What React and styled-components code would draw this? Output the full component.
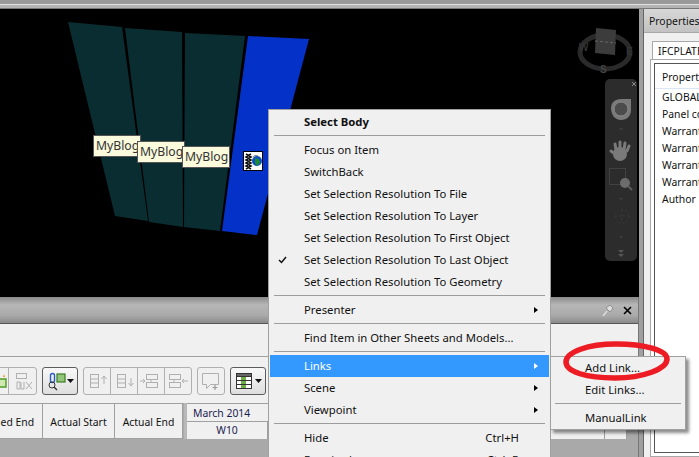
import React from 'react';
import styled, { createGlobalStyle } from 'styled-components';

const uiFont = '"Noto Sans", "Liberation Sans", sans-serif';

const GlobalStyle = createGlobalStyle`
  html, body {
    margin: 0;
    padding: 0;
    background: #a0a0a0;
    overflow: hidden;
  }
`;

const Screen = styled.div`
  position: relative;
  width: 699px;
  height: 457px;
  overflow: hidden;
  font-family: ${uiFont};
  font-size: 11.3px;
  color: #111;
`;

const TopBar = styled.div`
  height: 9px;
  box-sizing: border-box;
  background: linear-gradient(#999 0, #999 4px, #e0e0e0 4px, #e0e0e0 5px, #b4b4b4 5px, #b4b4b4 8px, #777 8px);
`;

const Workspace = styled.div`
  display: flex;
  height: 448px;
`;

const LeftColumn = styled.div`
  width: 639px;
  display: flex;
  flex-direction: column;
`;

const Viewport = styled.div`
  position: relative;
  height: 288px;
  background: #000;
  overflow: hidden;
`;

const SceneSvg = styled.svg`
  display: block;
`;

const Tag = styled.div`
  position: absolute;
  left: ${(p) => p.$x}px;
  top: ${(p) => p.$y}px;
  width: 48px;
  height: 22px;
  box-sizing: border-box;
  border: 1px solid #555;
  background: #fafadc;
  color: #333;
  font-size: 12.2px;
  line-height: 19px;
  padding-left: 2px;
  white-space: nowrap;
`;

const LinkBadge = styled.div`
  position: absolute;
  left: 243px;
  top: 142px;
  width: 20px;
  height: 20px;
  box-sizing: border-box;
  border: 1px solid #000;
  background: #fff;
`;

const NavBar = styled.div`
  position: absolute;
  left: 605px;
  top: 70px;
  width: 32px;
  height: 182px;
  border-radius: 5px;
  background: #2c2c2c;
`;

const DockPanel = styled.div`
  flex: 1;
  display: flex;
  flex-direction: column;
  border-right: 1px solid #777;
  min-height: 0;
`;

const DockTitle = styled.div`
  height: 26px;
  display: flex;
  align-items: center;
  justify-content: flex-end;
  gap: 7px;
  padding-right: 5px;
  background: linear-gradient(#8a8a8a 0, #b6b6b6 30%, #aaa 70%, #8a8a8a 100%);
  border-bottom: 1px solid #555;
`;

const BlankBand = styled.div`
  height: 32px;
  background: #f0f0f0;
  border-bottom: 1px solid #a0a0a0;
`;

const Toolbar = styled.div`
  height: 46px;
  box-sizing: border-box;
  background: #f0f0f0;
  display: flex;
  align-items: flex-start;
  gap: 5px;
  padding-top: 10px;
  margin-left: -19px;
`;

const ToolGroup = styled.div`
  display: flex;
  height: 26px;
  box-sizing: content-box;
  border: 1px solid ${(p) => (p.$active ? '#5c5c5c' : '#b0b0b0')};
  border-radius: 3px;
  background: ${(p) => (p.$active ? 'linear-gradient(#f8f8f8, #dedede)' : '#f0f0f0')};
`;

const ToolButton = styled.div`
  width: ${(p) => p.$w || 26}px;
  height: 26px;
  display: flex;
  align-items: center;
  justify-content: center;
  & + & {
    border-left: 1px solid #b0b0b0;
  }
`;

const TableArea = styled.div`
  flex: 1;
  background: #a9a9a9;
  min-height: 0;
  font-size: 10.4px;
`;

const TableHead = styled.div`
  display: flex;
  height: 36px;
  margin-left: -35px;
`;

const ColumnCell = styled.div`
  width: ${(p) => p.$w}px;
  box-sizing: border-box;
  background: #f0f0f0;
  border-top: 1px solid #a0a0a0;
  border-right: 1px solid #a0a0a0;
  border-bottom: 1px solid #a0a0a0;
  padding-top: 2px;
  display: flex;
  align-items: center;
  justify-content: center;
  white-space: nowrap;
`;

const SplitGap = styled.div`
  width: 3px;
  margin-left: 1px;
  background: #b8b8b8;
`;

const Gantt = styled.div`
  width: 440px;
  background: #f0f0f0;
  border-top: 1px solid #a0a0a0;
  display: flex;
  flex-direction: column;
  color: #1c1c50;
  box-sizing: border-box;
`;

const MonthRow = styled.div`
  height: 17px;
  line-height: 18px;
  padding-left: 6px;
  border-bottom: 1px solid #a0a0a0;
`;

const WeekRow = styled.div`
  flex: 1;
  display: flex;
`;

const Week = styled.div`
  width: ${(p) => p.$w}px;
  box-sizing: border-box;
  text-align: center;
  line-height: 17px;
  border-right: 1px solid #a0a0a0;
`;

const RightColumn = styled.div`
  flex: 1;
  padding-left: 4px;
  background: #a0a0a0;
  display: flex;
`;

const PropsPanel = styled.div`
  flex: 1;
  background: #f0f0f0;
  border-left: 1px solid #666;
  overflow: hidden;
  display: flex;
  flex-direction: column;
  font-size: 10.4px;
`;

const PropsTitle = styled.div`
  height: 23px;
  line-height: 24px;
  padding-left: 5px;
  white-space: nowrap;
  background: linear-gradient(#d8d8d8, #c2c2c2);
  border-bottom: 1px solid #a8a8a8;
`;

const TabRow = styled.div`
  padding: 8px 0 0 8px;
`;

const Tab = styled.div`
  height: 18px;
  width: 80px;
  box-sizing: border-box;
  line-height: 18px;
  padding-left: 5px;
  background: #fff;
  border: 1px solid #a8a8a8;
  border-bottom: 0;
  white-space: nowrap;
`;

const TabPane = styled.div`
  flex: 1;
  margin-left: 6px;
  padding: 3px;
  background: #fff;
  border: 1px solid #a8a8a8;
  border-right: 0;
  display: flex;
`;

const PropsList = styled.div`
  flex: 1;
  border: 1px solid #555;
  border-right: 0;
  background: #fff;
  padding-left: 7px;
  white-space: nowrap;
`;

const PropsHeader = styled.div`
  height: 24px;
  line-height: 26px;
  margin-left: -7px;
  padding-left: 7px;
  border-bottom: 1px solid #dbe6f4;
`;

const PropsRow = styled.div`
  height: 17px;
  line-height: 17px;
`;

const Menu = styled.div`
  position: absolute;
  left: 268px;
  top: 109px;
  width: 283px;
  height: 370px;
  box-sizing: border-box;
  padding: 1px;
  border: 1px solid #a0a0a0;
  background: #f0f0f0;
`;

const SubMenu = styled(Menu)`
  left: 550px;
  top: 356px;
  width: 136px;
  height: 74px;
  padding: 0;
  box-shadow: 3px 3px 3px rgba(0, 0, 0, 0.45);
`;

const MenuRow = styled.div`
  position: relative;
  height: 22px;
  line-height: 22px;
  padding-left: ${(p) => p.$indent}px;
  font-weight: ${(p) => (p.$bold ? 700 : 400)};
  background: ${(p) => (p.$active ? '#3399ff' : 'transparent')};
  color: ${(p) => (p.$active ? '#fff' : '#111')};
  white-space: nowrap;
`;

const Separator = styled.div`
  height: 1px;
  margin: 2px 4px 3px;
  background: #9c9c9c;
`;

const Shortcut = styled.span`
  position: absolute;
  right: 30px;
`;

const Arrow = styled.span`
  position: absolute;
  right: 11px;
  top: 8px;
  width: 0;
  height: 0;
  border-top: 3.5px solid transparent;
  border-bottom: 3.5px solid transparent;
  border-left: 4px solid ${(p) => (p.$active ? '#fff' : '#000')};
`;

const Check = styled.svg`
  position: absolute;
  left: 8px;
  top: 7px;
`;

const Annotation = styled.svg`
  position: absolute;
  left: 558px;
  top: 336px;
  pointer-events: none;
`;

const tags = [[93, 126], [137, 132], [182, 137]];

const mainMenu = [
  { label: 'Select Body', bold: true },
  'sep',
  { label: 'Focus on Item' },
  { label: 'SwitchBack' },
  { label: 'Set Selection Resolution To File' },
  { label: 'Set Selection Resolution To Layer' },
  { label: 'Set Selection Resolution To First Object' },
  { label: 'Set Selection Resolution To Last Object', checked: true },
  { label: 'Set Selection Resolution To Geometry' },
  'sep',
  { label: 'Presenter', sub: true },
  'sep',
  { label: 'Find Item in Other Sheets and Models...' },
  'sep',
  { label: 'Links', sub: true, active: true },
  { label: 'Scene', sub: true },
  { label: 'Viewpoint', sub: true },
  'sep',
  { label: 'Hide', keys: 'Ctrl+H' },
  { label: 'Required', keys: 'Ctrl+R' },
];

const properties = ['GLOBALID', 'Panel code', 'Warranty A', 'Warranty B', 'Warranty C', 'Warranty D', 'Author'];

const Scene = () => (
  <SceneSvg width="639" height="288" viewBox="0 9 639 288">
    <polygon points="68,22 122,27 148,221 115,216" fill="#0a2d31" />
    <polygon points="125,28 182,32 183,227 149,222" fill="#0a2d31" />
    <polygon points="185,33 245,36 220,231 184,227" fill="#0a2d31" />
    <polygon points="248,36 309,39 257,235 222,231" fill="#0431c8" />
    <ellipse cx="605" cy="52" rx="25" ry="17" fill="none" stroke="#2a2a2a" strokeWidth="5" />
    <polygon points="596,28 616,30 615,55 595,53" fill="#3c3c3c" />
    <line x1="595" y1="41" x2="616" y2="43" stroke="#666" strokeWidth="1" strokeDasharray="3 2" />
    <text x="579" y="51" fontSize="10" fontWeight="700" fill="#333" fontFamily="Liberation Sans">W</text>
    <text x="626" y="55" fontSize="10" fontWeight="700" fill="#333" fontFamily="Liberation Sans">E</text>
    <text x="600" y="73" fontSize="10" fontWeight="700" fill="#444" fontFamily="Liberation Sans">S</text>
  </SceneSvg>
);

const LinkIcon = () => (
  <svg width="18" height="18" viewBox="0 0 18 18">
    <path d="M2 2l5 3-5 3 5 3-5 3 5 3M7 2L2 5l5 3-5 3 5 3-5 3" fill="none" stroke="#111" strokeWidth="1.6" />
    <circle cx="13" cy="9" r="5" fill="#0b4fc4" />
    <path d="M11 6l4 1 1 4-3 3-2-3z" fill="#1f8a2e" />
    <path d="M9 5c1-2 5-2 6 0" fill="none" stroke="#777" strokeWidth="1" />
  </svg>
);

const NavIcons = () => (
  <svg width="32" height="182" viewBox="605 79 32 182">
    <path d="M611 108c0-6 5-9 10-9h10v11c0 6-4 10-10 10s-10-5-10-12z" fill="#7a7a7a" />
    <circle cx="621" cy="109" r="7" fill="#4c4c4c" stroke="#8a8a8a" />
    <path d="M633 82l4 4M637 82l-4 4" stroke="#8a8a8a" transform="translate(-1 0)" />
    <path d="M619 128l2 3 2-3z" fill="#3c3c3c" />
    <g stroke="#7a7a7a" strokeWidth="3" strokeLinecap="round">
      <line x1="616" y1="150" x2="615" y2="144" />
      <line x1="620" y1="150" x2="620" y2="142" />
      <line x1="624" y1="150" x2="625" y2="143" />
      <line x1="627" y1="151" x2="629" y2="146" />
      <line x1="615" y1="154" x2="611" y2="151" />
    </g>
    <ellipse cx="620" cy="154" rx="7" ry="7" fill="#7a7a7a" />
    <rect x="609.5" y="168.5" width="16" height="16" fill="none" stroke="#414141" />
    <circle cx="625" cy="183" r="5" fill="#6c6c6c" />
    <line x1="628" y1="186" x2="632" y2="190" stroke="#5c5c5c" strokeWidth="2" />
    <path d="M619 198l2 3 2-3z" fill="#3c3c3c" />
    <circle cx="622" cy="216" r="7" fill="none" stroke="#383838" strokeDasharray="2 2" />
    <path d="M615 216h14M622 210v12" stroke="#3a3a3a" strokeDasharray="2 2" />
    <path d="M619 236l2 3 2-3z" fill="#3c3c3c" />
    <path d="M618 250l3 3 3-3zM618 254l3 3 3-3z" fill="#555" />
  </svg>
);

const PinClose = () => (
  <>
    <svg width="14" height="14" viewBox="0 0 14 14">
      <path d="M2 13l4-5" stroke="#ddd" strokeWidth="1.4" />
      <path d="M5 5l4-3 3 3-3 4z" fill="#ddd" stroke="#777" strokeWidth="0.7" />
    </svg>
    <svg width="11" height="11" viewBox="0 0 11 11">
      <path d="M2 2l7 7M9 2l-7 7" stroke="#000" strokeWidth="1.6" />
    </svg>
  </>
);

const ToolIcon = ({ children, w = 24 }) => (
  <svg width={w} height="20" viewBox={`0 0 ${w} 20`} fill="none">
    {children}
  </svg>
);

const dim = { stroke: '#b0b0b0', strokeWidth: 1 };

const StackLines = ({ x = 3 }) => (
  <g {...dim}>
    <rect x={x + 0.5} y="3.5" width="8" height="13" />
    <path d={`M${x} 8h9M${x} 12h9`} />
  </g>
);

const BoxPair = ({ x = 7 }) => (
  <g {...dim}>
    <rect x={x + 0.5} y="3.5" width="11" height="5" />
    <rect x={x + 0.5} y="11.5" width="11" height="5" />
    <path d={`M${x + 5} 8v4`} />
  </g>
);

const DropTriangle = () => <path d="M0 8h7l-3.5 4z" fill="#111" transform="translate(22 0)" />;

const Toolstrip = () => (
  <Toolbar>
    <ToolGroup>
      <ToolButton>
        <ToolIcon>
          <path d="M20 6l1-3 1 3z" fill="#f0a020" />
          <path d="M16 8h7v8h-7z" fill="#cfe9b0" stroke="#4d9a25" strokeWidth="1.4" />
        </ToolIcon>
      </ToolButton>
      <ToolButton $w={27}>
        <ToolIcon>
          <rect x="5.5" y="2.5" width="10" height="5" {...dim} />
          <path d="M6 11v7h3v-7zM10 11v7h3v-7M15 11l6 7M21 11l-6 7" {...dim} />
        </ToolIcon>
      </ToolButton>
    </ToolGroup>
    <ToolGroup $active>
      <ToolButton $w={34}>
        <ToolIcon w={30}>
          <rect x="5.5" y="2.5" width="4" height="9" rx="2" stroke="#2a5bc0" strokeWidth="1.4" />
          <rect x="12" y="3" width="8" height="8" fill="#93c67a" stroke="#3a7d22" strokeWidth="1.2" />
          <circle cx="7" cy="14" r="3" stroke="#333" />
          <path d="M9 16l3 3" stroke="#333" strokeWidth="1.4" />
          <DropTriangle />
        </ToolIcon>
      </ToolButton>
    </ToolGroup>
    <ToolGroup>
      <ToolButton>
        <ToolIcon>
          <StackLines x={5} />
          <path d="M19 13V5M16.5 8l2.5-3 2.5 3" {...dim} />
        </ToolIcon>
      </ToolButton>
      <ToolButton>
        <ToolIcon>
          <StackLines x={5} />
          <path d="M19 7v8M16.5 12l2.5 3 2.5-3" {...dim} />
        </ToolIcon>
      </ToolButton>
      <ToolButton>
        <ToolIcon>
          <BoxPair />
          <path d="M1 10h5M4 8l2 2-2 2" {...dim} />
        </ToolIcon>
      </ToolButton>
      <ToolButton>
        <ToolIcon>
          <BoxPair x={3} />
          <path d="M22 10h-6M18 8l-2 2 2 2" {...dim} />
        </ToolIcon>
      </ToolButton>
    </ToolGroup>
    <ToolGroup>
      <ToolButton>
        <ToolIcon>
          <path d="M3.5 2.5h16v11h-8l-4 4v-4h-4z" {...dim} />
          <path d="M16 14v5M13.5 16.5h5" stroke="#999" strokeWidth="1.2" />
        </ToolIcon>
      </ToolButton>
    </ToolGroup>
    <ToolGroup $active>
      <ToolButton $w={34}>
        <ToolIcon w={30}>
          <rect x="3.5" y="2.5" width="15" height="15" fill="#fff" stroke="#333" />
          <rect x="3.5" y="2.5" width="15" height="3" fill="#666" stroke="#333" />
          <rect x="8" y="6" width="5" height="11" fill="#6fae45" />
          <path d="M4 9.5h14M4 13.5h14" stroke="#333" />
          <DropTriangle />
        </ToolIcon>
      </ToolButton>
    </ToolGroup>
  </Toolbar>
);

const App = () => (
  <Screen>
    <GlobalStyle />
    <TopBar />
    <Workspace>
      <LeftColumn>
        <Viewport>
          <Scene />
          {tags.map(([x, y]) => (
            <Tag key={x} $x={x} $y={y}>MyBlog</Tag>
          ))}
          <LinkBadge><LinkIcon /></LinkBadge>
          <NavBar><NavIcons /></NavBar>
        </Viewport>
        <DockPanel>
          <DockTitle><PinClose /></DockTitle>
          <BlankBand />
          <Toolstrip />
          <TableArea>
            <TableHead>
              <ColumnCell $w={78}>Planned End</ColumnCell>
              <ColumnCell $w={72}>Actual Start</ColumnCell>
              <ColumnCell $w={68}>Actual End</ColumnCell>
              <SplitGap />
              <Gantt>
                <MonthRow>March 2014</MonthRow>
                <WeekRow>
                  <Week $w={81}>W10</Week>
                  <Week $w={337} />
                  <Week $w={22} />
                </WeekRow>
              </Gantt>
            </TableHead>
          </TableArea>
        </DockPanel>
      </LeftColumn>
      <RightColumn>
        <PropsPanel>
          <PropsTitle>Properties</PropsTitle>
          <TabRow><Tab>IFCPLATE</Tab></TabRow>
          <TabPane>
            <PropsList>
              <PropsHeader>Property</PropsHeader>
              {properties.map((name) => (
                <PropsRow key={name}>{name}</PropsRow>
              ))}
            </PropsList>
          </TabPane>
        </PropsPanel>
      </RightColumn>
    </Workspace>
    <Menu>
      {mainMenu.map((item, i) =>
        item === 'sep' ? (
          <Separator key={i} />
        ) : (
          <MenuRow key={item.label} $indent={34} $bold={item.bold} $active={item.active}>
            {item.checked && (
              <Check width="9" height="8" viewBox="0 0 9 8">
                <path d="M1 4l2.5 2.5L8 1" fill="none" stroke="#111" strokeWidth="1.5" />
              </Check>
            )}
            {item.label}
            {item.keys && <Shortcut>{item.keys}</Shortcut>}
            {item.sub && <Arrow $active={item.active} />}
          </MenuRow>
        ),
      )}
    </Menu>
    <SubMenu>
      <MenuRow $indent={34}>Add Link...</MenuRow>
      <MenuRow $indent={34}>Edit Links...</MenuRow>
      <Separator />
      <MenuRow $indent={34}>ManualLink</MenuRow>
    </SubMenu>
    <Annotation width="120" height="50" viewBox="558 336 120 50">
      <path
        d="M566 362c0-10 22-18 50-18 28 0 51 6 51 15 0 10-24 19-52 19-28 0-49-6-49-16z"
        fill="none"
        stroke="#ed1c24"
        strokeWidth="5.5"
      />
    </Annotation>
  </Screen>
);

export default App;
